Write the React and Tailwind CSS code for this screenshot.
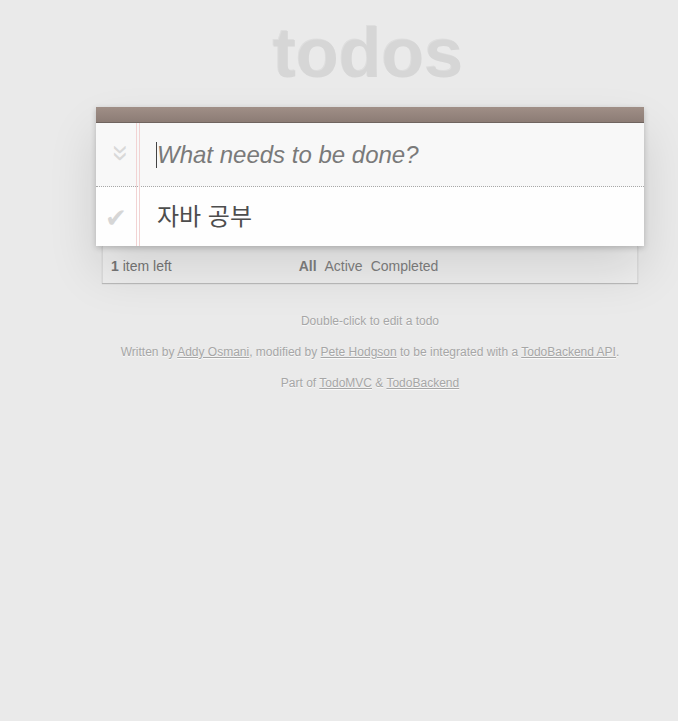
export default function App() {
  const font = "font-['Liberation_Sans','Noto_Sans_CJK_KR',Arial,sans-serif]";
  return (
    <div className={`min-h-[721px] bg-[#eaeaea] ${font}`}>
      <div className="ml-[96px] w-[548px] pt-[18px]">
        <h1 className="text-center text-[70px] leading-[70px] font-bold text-[#d6d6d6] [text-shadow:-1px_-1px_0_rgba(0,0,0,0.05)] -translate-x-[2px]">
          todos
        </h1>
        <div className="mt-[19px] relative">
          <div className="relative bg-[#fefefe] shadow-[0_2px_6px_0_rgba(0,0,0,0.2),0_25px_50px_0_rgba(0,0,0,0.12)]">
            <div className="h-[16px] bg-gradient-to-b from-[#a08f87] to-[#8c7c75] border-b border-[#6f645f]" />
            <div className="h-[64px] bg-[#f8f8f8] border-b border-dotted border-[#a8a8a8] flex items-center">
              <div className="w-[40px] flex justify-center">
                <span className="rotate-90 text-[30px] leading-none text-[#d9d9d9] font-['Liberation_Sans',sans-serif] translate-x-[6px] translate-y-[-2px]">»</span>
              </div>
              <div className="pl-[20px] flex items-center">
                <span className="w-[1px] h-[26px] bg-[#444] mr-[1px]" />
                <span className="text-[24px] italic text-[#7a7a7a] -translate-x-[1px]">What needs to be done?</span>
              </div>
            </div>
            <div className="h-[59px] flex items-center">
              <div className="w-[40px] flex justify-center">
                <span className="text-[26px] leading-none text-[#d6d6d6] font-['DejaVu_Sans',sans-serif] translate-x-[0px] translate-y-[1px]">✔</span>
              </div>
              <div className="pl-[21px] text-[24px] text-[#4d4d4d] leading-none">자바 공부</div>
            </div>
            <div className="absolute top-[16px] bottom-0 left-[40px] w-[4px] border-l border-r border-[#f2d3d3]" />
          </div>
          <div className="mx-[6px] h-[37px] pt-[4px] bg-[#efefef] border-l border-r border-[#dcdcdc] shadow-[0_1px_1px_rgba(0,0,0,0.2)] grid grid-cols-[1fr_auto_1fr] items-center pl-[8px] pr-[9px] text-[14px] text-[#777]">
            <div><b className="font-bold">1</b> item left</div>
            <div className="flex gap-[8px] -translate-x-[1px]">
              <span className="font-bold">All</span>
              <span>Active</span>
              <span>Completed</span>
            </div>
            <div />
          </div>
        </div>
        <div className="mt-[31px] flex flex-col gap-[17px] text-center text-[12px] leading-[14px] text-[#a6a6a6] [text-shadow:0_1px_0_rgba(255,255,255,0.7)]">
          <p>Double-click to edit a todo</p>
          <p>
            Written by <a className="underline">Addy Osmani</a>, modified by{" "}
            <a className="underline">Pete Hodgson</a> to be integrated with a{" "}
            <a className="underline">TodoBackend API</a>.
          </p>
          <p>
            Part of <a className="underline">TodoMVC</a> &amp;{" "}
            <a className="underline">TodoBackend</a>
          </p>
        </div>
      </div>
    </div>
  );
}
